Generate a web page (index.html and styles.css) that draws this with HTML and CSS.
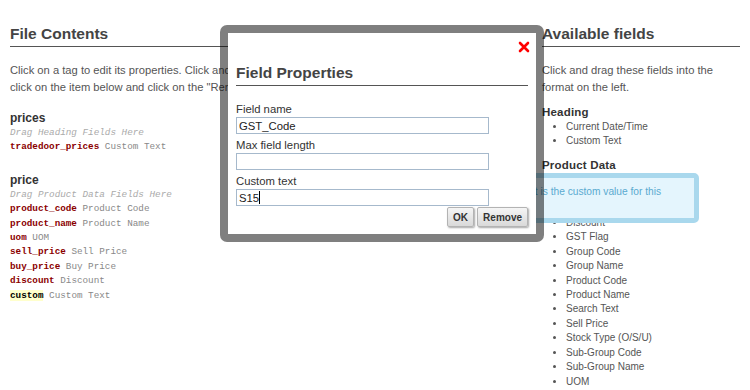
FILE: index.html
```html
<!DOCTYPE html>
<html lang="en">
 <head>
    <meta charset="utf-8">
    <title>Print Format</title>
    <link rel="stylesheet" href="styles.css">
 </head>
 <body>

    <div class="page">
      <div class="col-main">
        <h2 class="section-title">File Contents</h2>
        <p class="intro">Click on a tag to edit its properties. Click and drag a tag to move it. To remove a tag,<br>click on the item below and click on the "Remove" button.</p>

        <h3 class="group-name">prices</h3>
        <div class="tag-list">
          <div class="tag-hint">Drag Heading Fields Here</div>
          <div><span class="tag">tradedoor_prices</span> Custom Text</div>
        </div>

        <h3 class="group-name group-gap">price</h3>
        <div class="tag-list">
          <div class="tag-hint">Drag Product Data Fields Here</div>
          <div><span class="tag">product_code</span> Product Code</div>
          <div><span class="tag">product_name</span> Product Name</div>
          <div><span class="tag">uom</span> UOM</div>
          <div><span class="tag">sell_price</span> Sell Price</div>
          <div><span class="tag">buy_price</span> Buy Price</div>
          <div><span class="tag">discount</span> Discount</div>
          <div><span class="tag tag-active">custom</span> Custom Text</div>
        </div>
      </div>

      <div class="col-side">
        <h2 class="section-title">Available fields</h2>
        <p class="intro">Click and drag these fields into the format on the left.</p>

        <h4 class="side-heading">Heading</h4>
        <ul class="field-list">
          <li>Current Date/Time</li>
          <li>Custom Text</li>
        </ul>

        <h4 class="side-heading">Product Data</h4>
        <ul class="field-list">
          <li>Buy Price</li>
          <li>Custom Text</li>
          <li>Date</li>
          <li>Discount</li>
          <li>GST Flag</li>
          <li>Group Code</li>
          <li>Group Name</li>
          <li>Product Code</li>
          <li>Product Name</li>
          <li>Search Text</li>
          <li>Sell Price</li>
          <li>Stock Type (O/S/U)</li>
          <li>Sub-Group Code</li>
          <li>Sub-Group Name</li>
          <li>UOM</li>
        </ul>
      </div>
    </div>

    <!-- help bubble for the custom text field -->
    <div class="tooltip">The text that is the custom value for this field.</div>

    <div class="modal">
      <a class="modal-close" href="#" title="Close">
        <svg width="12" height="12" viewBox="0 0 12 12"><path d="M2 2L10 10M10 2L2 10" stroke="#f00" stroke-width="2.6" stroke-linecap="round"/></svg>
      </a>
      <h2 class="section-title modal-title">Field Properties</h2>

      <div class="modal-form">
        <div class="field">
          <label>Field name</label>
          <input type="text" value="GST_Code">
        </div>
        <div class="field">
          <label>Max field length</label>
          <input type="text" value="">
        </div>
        <div class="field">
          <label>Custom text</label>
          <div class="input-wrap">
            <input type="text" value="S15">
            <span class="caret"></span>
          </div>
        </div>
      </div>

      <div class="modal-buttons">
        <button>OK</button>
        <button>Remove</button>
      </div>
    </div>

 </body>
</html>
```

FILE: styles.css
```css
html, body {
    margin: 0;
    padding: 0;
    background: #fff;
}

body {
    font-family: "Liberation Sans", Arial, sans-serif;
    color: #555;
}

.page {
    display: flex;
    gap: 22px;
    padding: 25px 10px 0;
}

.col-main {
    flex: 1;
}

.col-side {
    width: 198px;
}

.section-title {
    margin: 0;
    padding-bottom: 3px;
    font-size: 15.5px;
    line-height: 18px;
    color: #444;
    border-bottom: 1px solid #555;
}

.intro {
    margin: 15px 0 0;
    font-size: 11.2px;
    line-height: 17px;
    color: #555;
}

/* left column: tags */

.group-name {
    margin: 15px 0 0;
    font-size: 12px;
    line-height: 15px;
    color: #333;
}

.group-gap {
    margin-top: 18px;
}

.tag-list {
    font-family: "Liberation Mono", "Courier New", monospace;
    font-size: 9.3px;
    line-height: 14.4px;
    color: #888;
}

.tag-hint {
    font-style: italic;
    color: #aaa;
}

.tag {
    color: #8b0000;
    font-weight: bold;
}

.tag-active {
    color: #000;
    background: #ffffcc;
}

/* right column: fields */

.side-heading {
    margin: 9px 0 0;
    font-size: 11.5px;
    line-height: 14px;
    color: #333;
    letter-spacing: 0.2px;
}

.field-list {
    margin: 1px 0 0;
    padding-left: 24px;
    font-size: 10px;
    line-height: 14.4px;
    color: #555;
}

/* tooltip */

.tooltip {
    position: absolute;
    left: 466px;
    top: 173px;
    width: 233px;
    box-sizing: border-box;
    padding: 8px 10px;
    font-size: 10.2px;
    line-height: 12px;
    color: #5aaad0;
    background: #e4f5fd;
    border: 5px solid #a9d8ed;
    border-radius: 5px;
}

/* modal */

.modal {
    position: absolute;
    left: 220px;
    top: 25px;
    width: 324px;
    box-sizing: border-box;
    padding: 8px 8px 7px;
    background: #fff;
    background-clip: padding-box;
    border: 8px solid rgba(0, 0, 0, 0.5);
    border-radius: 7px;
    z-index: 2;
}

.modal-close {
    position: absolute;
    top: 8px;
    right: 6px;
    width: 12px;
    height: 12px;
}

.modal-close svg {
    display: block;
}

.modal-title {
    margin-top: 23px;
}

.modal-form {
    margin-top: 16px;
}

.field + .field {
    margin-top: 4px;
}

.field label {
    display: block;
    margin-bottom: 1px;
    font-size: 11.3px;
    line-height: 14px;
    color: #333;
}

.field input {
    display: block;
    box-sizing: border-box;
    width: 253px;
    height: 17px;
    margin: 0;
    padding: 0 2px;
    font-family: "Liberation Sans", Arial, sans-serif;
    font-size: 11.3px;
    color: #222;
    border: 1px solid #a6b9cc;
    outline: none;
}

.input-wrap {
    position: relative;
}

.caret {
    position: absolute;
    left: 23px;
    top: 2px;
    width: 1px;
    height: 13px;
    background: #000;
}

.modal-buttons {
    display: flex;
    justify-content: flex-end;
    gap: 3px;
    margin-top: 1px;
}

.modal-buttons button {
    height: 20px;
    padding: 0 5px;
    font-family: "Liberation Sans", Arial, sans-serif;
    font-size: 10px;
    font-weight: bold;
    color: #333;
    background: linear-gradient(#f5f5f5, #d9d9d9);
    border: 1px solid #b3b3b3;
    border-radius: 2px;
    box-shadow: 1px 1px 2px rgba(0, 0, 0, 0.35);
}
```
